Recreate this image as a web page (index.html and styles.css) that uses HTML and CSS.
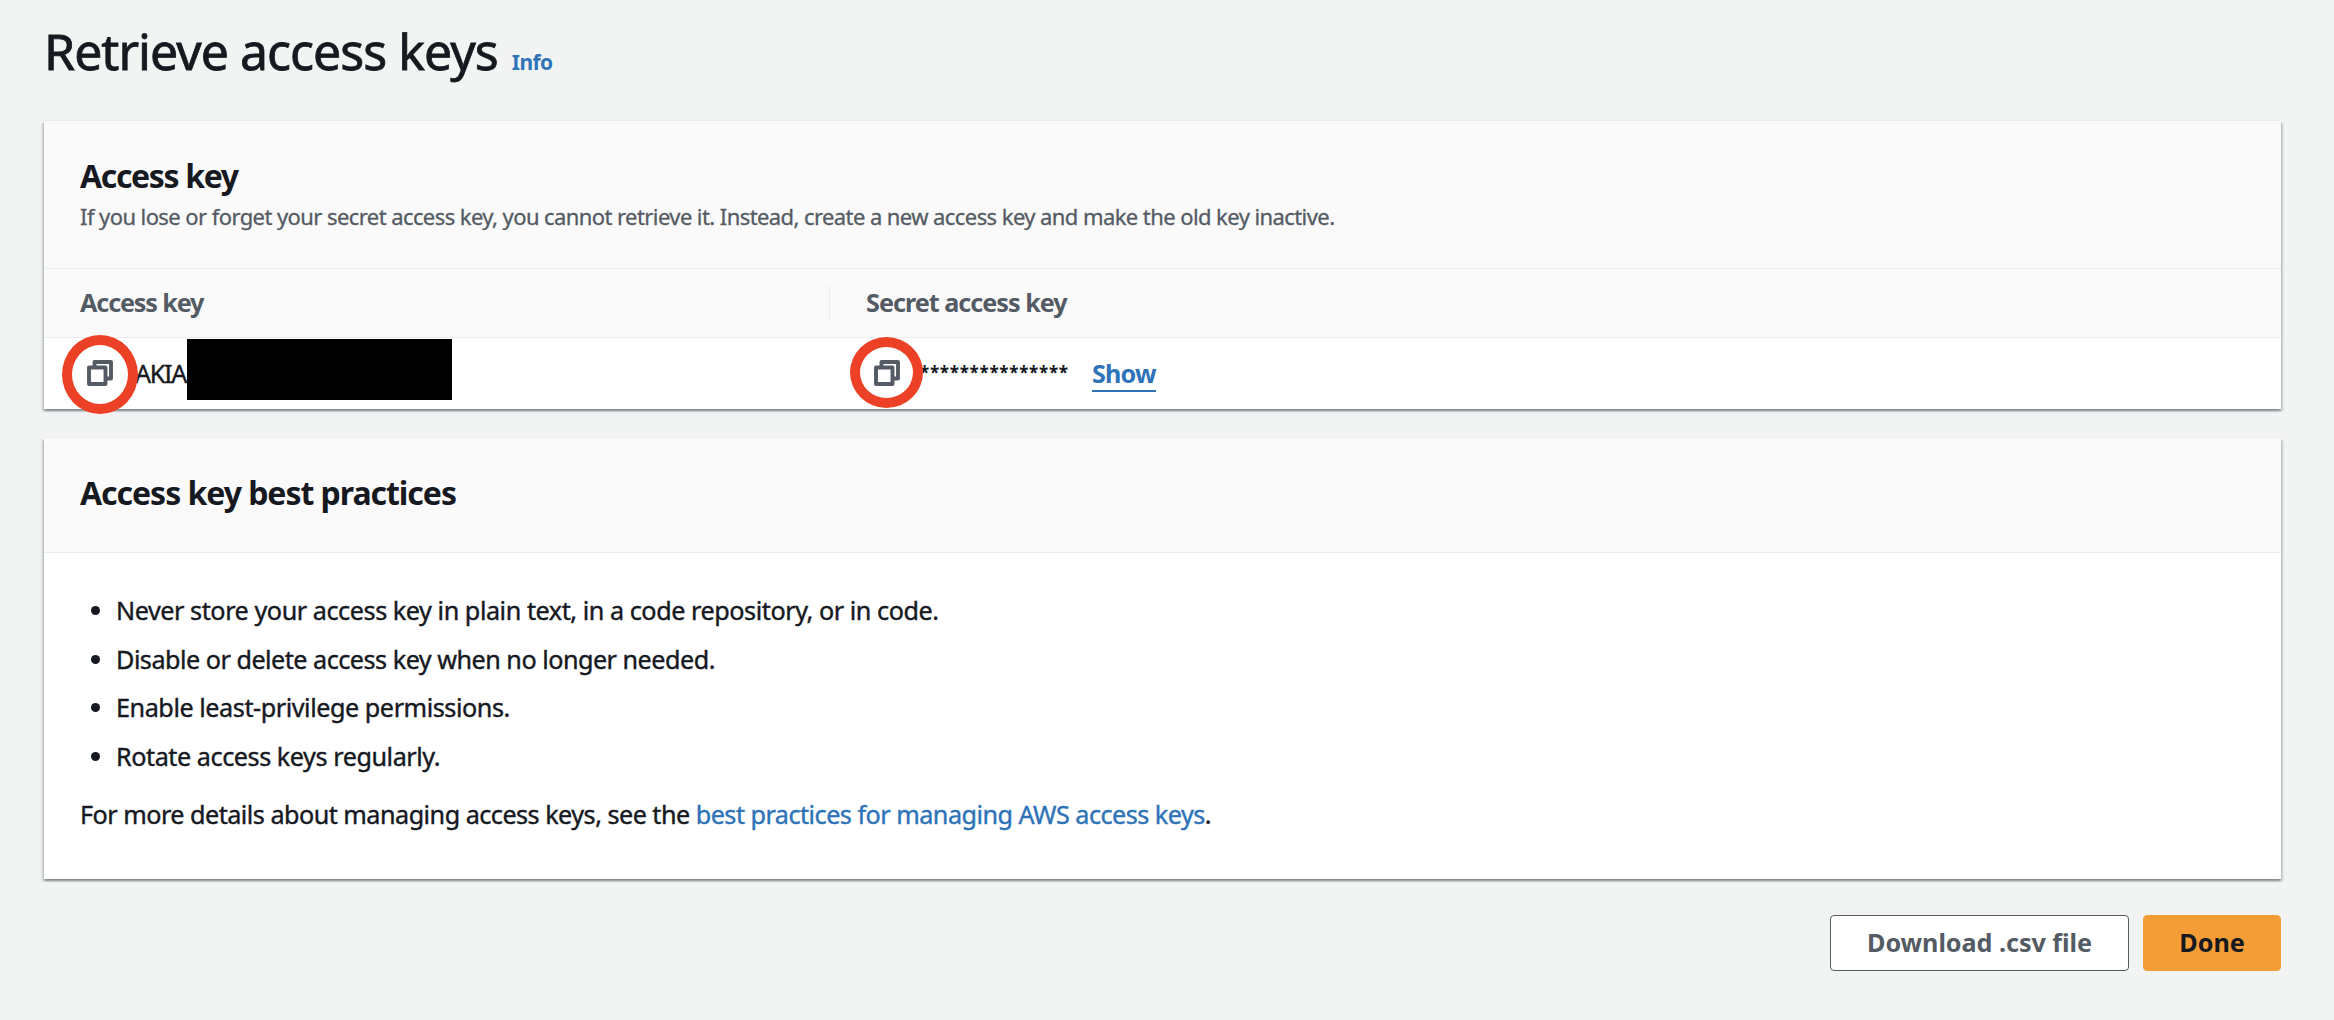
FILE: index.html
```html
<!DOCTYPE html>
<html lang="en">
<head>
<meta charset="utf-8">
<title>Retrieve access keys</title>
<link rel="stylesheet" href="styles.css">
</head>
<body>
<svg class="sprite" aria-hidden="true">
  <symbol id="copy" viewBox="0 0 26 26">
    <path d="M7.500 6V2H24v16.500h-4" fill="none" stroke="currentColor" stroke-width="3.900" stroke-linejoin="round"/>
    <path d="M2 7.500h16.500V24H2z" fill="none" stroke="currentColor" stroke-width="3.900" stroke-linejoin="round"/>
  </symbol>
</svg>
<main class="page">
  <header class="page-header">
    <h1 class="page-title">Retrieve access keys</h1>
    <a class="info">Info</a>
  </header>

  <section class="card">
    <div class="card-header key-header">
      <h2 class="card-title card-title-key">Access key</h2>
      <p class="card-description">If you lose or forget your secret access key, you cannot retrieve it. Instead, create a new access key and make the old key inactive.</p>
    </div>
    <div class="row head-row">
      <div class="cell th th-key">Access key</div>
      <div class="cell th th-secret">Secret access key</div>
    </div>
    <div class="row value-row">
      <div class="cell key-cell">
        <svg class="copy-icon"><use href="#copy"/></svg>
        <span class="key-text">AKIA</span>
        <span class="redaction"></span>
        <span class="ring ring-key"></span>
      </div>
      <div class="cell secret-cell">
        <svg class="copy-icon"><use href="#copy"/></svg>
        <span class="secret-text">***************</span>
        <a class="show">Show</a>
        <span class="ring ring-secret"></span>
      </div>
    </div>
  </section>

  <section class="card practices">
    <div class="card-header practices-header">
      <h2 class="card-title card-title-practices">Access key best practices</h2>
    </div>
    <div class="practices-body">
      <ul class="list">
        <li>Never store your access key in plain text, in a code repository, or in code.</li>
        <li class="tight">Disable or delete access key when no longer needed.</li>
        <li>Enable least-privilege permissions.</li>
        <li>Rotate access keys regularly.</li>
      </ul>
      <p class="more">For more details about managing access keys, see the <a class="link">best practices for managing AWS access keys</a>.</p>
    </div>
  </section>

  <footer class="actions">
    <button class="btn">Download .csv file</button>
    <button class="btn btn-primary">Done</button>
  </footer>
</main>
</body>
</html>
```
FILE: styles.css
```css
* { box-sizing: border-box; }

body {
  margin: 0;
  background: #f2f3f3;
  color: #16191f;
  font-family: "Noto Sans", "Open Sans", sans-serif;
  font-size: 25.2px;
}

h1, h2, p, ul { margin: 0; padding: 0; }

.sprite { position: absolute; width: 0; height: 0; }

.page { padding: 0 53px 0 44px; }

.page-header {
  display: flex;
  align-items: baseline;
  height: 121px;
  padding-top: 21px;
}

.page-title {
  font-size: 50px;
  font-weight: 400;
  line-height: 60px;
  letter-spacing: -0.97px;
  -webkit-text-stroke: 0.8px currentColor;
}

.info {
  margin-left: 14px;
  color: #2e73b8;
  font-size: 21px;
  font-weight: 700;
  letter-spacing: -0.6px;
}

.card {
  height: 288px;
  background: #fff;
  box-shadow: 0 -1px 0 #eaeded,
    0 2px 2px rgba(0, 28, 36, 0.3),
    2px 2px 2px rgba(0, 28, 36, 0.15),
    -2px 2px 2px rgba(0, 28, 36, 0.15);
}

.card-header {
  padding: 37px 36px 0;
  background: #fafafa;
  border-bottom: 1px solid #eaeded;
}

.key-header { height: 148px; }

.card-title {
  font-size: 32px;
  line-height: 36px;
  font-weight: 700;
}

.card-title-key { letter-spacing: -1.35px; }
.card-title-practices { letter-spacing: -1.04px; }

.card-description {
  margin-top: 6px;
  color: #545b64;
  font-size: 22px;
  line-height: 32px;
  letter-spacing: -0.58px;
  -webkit-text-stroke: 0.3px currentColor;
}

.row {
  display: grid;
  grid-template-columns: 786px 1fr;
  align-items: center;
}

.cell {
  display: flex;
  align-items: center;
  position: relative;
  padding-left: 36px;
}

.head-row {
  height: 69px;
  background: #fafafa;
  border-bottom: 1px solid #eaeded;
}

.th {
  height: 36px;
  padding-bottom: 2px;
  color: #545b64;
  font-weight: 700;
}

.th-key { letter-spacing: -1.15px; border-right: 1px solid #eaeded; }
.th-secret { letter-spacing: -1px; }

.value-row { height: 71px; }
.value-row .cell { height: 71px; padding-bottom: 1px; }
.value-row .key-cell { padding-left: 43px; }
.value-row .secret-cell { padding-left: 44px; }

.copy-icon {
  width: 26px;
  height: 26px;
  color: #545b64;
}

.key-text {
  margin-left: 22px;
  padding-bottom: 1px;
  letter-spacing: -1.3px;
  -webkit-text-stroke: 0.4px currentColor;
}

.redaction {
  position: absolute;
  left: 143px;
  top: 1px;
  width: 265px;
  height: 61px;
  background: #000;
}

.ring {
  position: absolute;
  border: 10px solid #ec4126;
  border-radius: 50%;
}

.ring-key { left: 18px; top: -3px; width: 76px; height: 79px; }
.ring-secret { left: 20px; top: -1px; width: 73px; height: 71px; }

.secret-text {
  width: 151px;
  margin-left: 20px;
  padding-bottom: 2px;
  font-size: 17px;
  font-weight: 700;
  letter-spacing: 0.7px;
}

.show {
  margin: 0 0 1px 21px;
  color: #2e73b8;
  font-weight: 700;
  line-height: 34px;
  letter-spacing: -0.83px;
  box-shadow: 0 2px 0 #2e73b8;
}

.practices {
  height: 441px;
  margin-top: 29px;
}

.practices-header { height: 115px; }
.practices-body {
  padding: 33px 36px 0;
  -webkit-text-stroke: 0.4px currentColor;
}

.list {
  padding-left: 36px;
  line-height: 48.700px;
  letter-spacing: -0.45px;
}

.list li::marker { letter-spacing: -1px; }
.list .tight { letter-spacing: -0.51px; }

.more {
  margin-top: 13px;
  line-height: 40px;
  letter-spacing: -0.52px;
}

.link { color: #2e73b8; }

.actions {
  display: flex;
  justify-content: flex-end;
  gap: 14px;
  margin-top: 36px;
}

.btn {
  width: 299px;
  height: 56px;
  padding: 0 0 2px;
  border: 1px solid #545b64;
  border-radius: 4px;
  background: #fff;
  color: #545b64;
  font: 700 25.200px "Noto Sans", "Open Sans", sans-serif;
  letter-spacing: -0.05px;
}

.btn-primary {
  width: 138px;
  border-color: #f49d37;
  background: #f49d37;
  color: #16191f;
}
```
